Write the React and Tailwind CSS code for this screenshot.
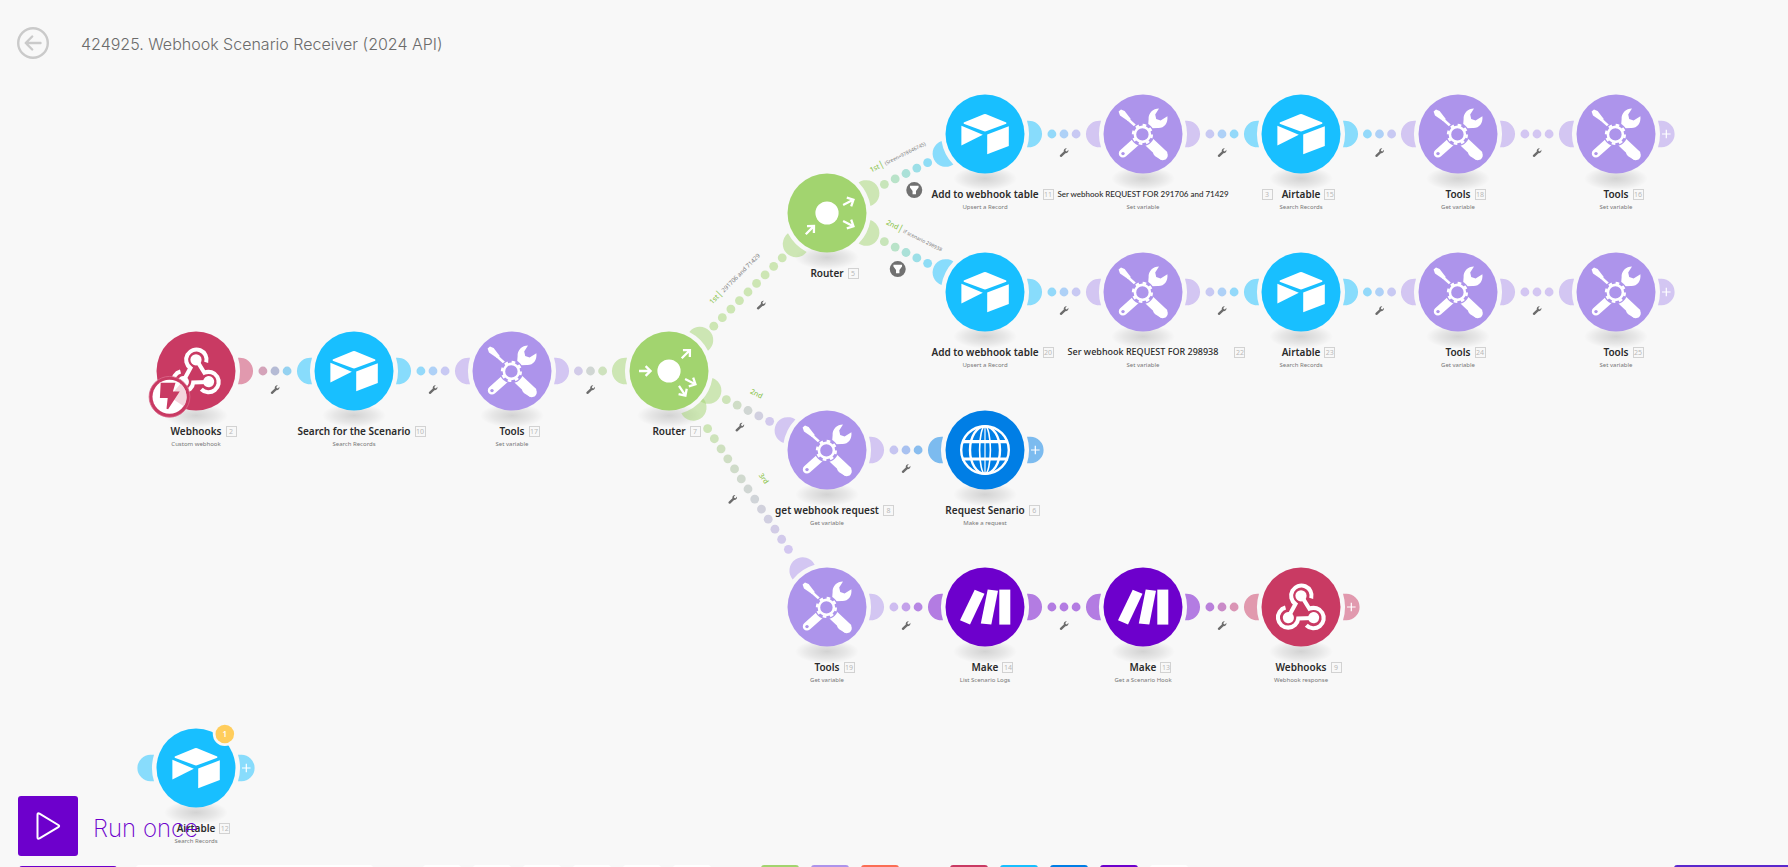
import React from "react";

const COLORS = {
  webhook: "#c93a63",
  airtable: "#18bfff",
  tools: "#ad94eb",
  router: "#a2d46f",
  http: "#007ee5",
  make: "#6d00cc",
};

const NODES = [
  { id: 2, kind: "webhook", x: 196, y: 371, title: "Webhooks", sub: "Custom webhook", tabs: [0], instant: true },
  { id: 10, kind: "airtable", x: 354, y: 371, title: "Search for the Scenario", sub: "Search Records", tabs: [180, 0] },
  { id: 17, kind: "tools", x: 512, y: 371, title: "Tools", sub: "Set variable", tabs: [180, 0] },
  { id: 7, kind: "router", x: 669, y: 371, title: "Router", tabs: [180, -45, 26.6, 56.3], inAngle: 0, outAngles: [-45, 26.6, 56.3] },
  { id: 5, kind: "router", x: 827, y: 213, title: "Router", tabs: [135, -26.6, 26.6], inAngle: -45, outAngles: [-26.6, 26.6] },
  { id: 11, kind: "airtable", x: 985, y: 134, title: "Add to webhook table", sub: "Upsert a Record", tabs: [153.4, 0] },
  { id: 3, kind: "tools", x: 1143, y: 134, title: "Ser webhook REQUEST FOR 291706 and 71429", sub: "Set variable", tabs: [180, 0], size: "small", shift: 29 },
  { id: 15, kind: "airtable", x: 1301, y: 134, title: "Airtable", sub: "Search Records", tabs: [180, 0] },
  { id: 18, kind: "tools", x: 1458, y: 134, title: "Tools", sub: "Get variable", tabs: [180, 0] },
  { id: 16, kind: "tools", x: 1616, y: 134, title: "Tools", sub: "Set variable", tabs: [180], openTabs: [0] },
  { id: 20, kind: "airtable", x: 985, y: 292, title: "Add to webhook table", sub: "Upsert a Record", tabs: [-153.4, 0] },
  { id: 22, kind: "tools", x: 1143, y: 292, title: "Ser webhook REQUEST FOR 298938", sub: "Set variable", tabs: [180, 0], size: "medium", shift: 12 },
  { id: 23, kind: "airtable", x: 1301, y: 292, title: "Airtable", sub: "Search Records", tabs: [180, 0] },
  { id: 24, kind: "tools", x: 1458, y: 292, title: "Tools", sub: "Get variable", tabs: [180, 0] },
  { id: 25, kind: "tools", x: 1616, y: 292, title: "Tools", sub: "Set variable", tabs: [180], openTabs: [0] },
  { id: 8, kind: "tools", x: 827, y: 450, title: "get webhook request", sub: "Get variable", tabs: [-153.4, 0] },
  { id: 6, kind: "http", x: 985, y: 450, title: "Request Senario", sub: "Make a request", tabs: [180], openTabs: [0] },
  { id: 19, kind: "tools", x: 827, y: 607, title: "Tools", sub: "Get variable", tabs: [-123.7, 0] },
  { id: 14, kind: "make", x: 985, y: 607, title: "Make", sub: "List Scenario Logs", tabs: [180, 0] },
  { id: 13, kind: "make", x: 1143, y: 607, title: "Make", sub: "Get a Scenario Hook", tabs: [180, 0] },
  { id: 9, kind: "webhook", x: 1301, y: 607, title: "Webhooks", sub: "Webhook response", tabs: [180], openTabs: [0] },
  { id: 12, kind: "airtable", x: 196, y: 768, title: "Airtable", sub: "Search Records", tabs: [], openTabs: [180, 0], warn: 1 },
];

const LINKS = [
  { from: 2, to: 10, dots: 3 },
  { from: 10, to: 17, dots: 3 },
  { from: 17, to: 7, dots: 3 },
  { from: 7, to: 5, dots: 9, order: "1st", label: "291706 and 71429", labelSize: 6 },
  { from: 7, to: 8, dots: 5, order: "2nd" },
  { from: 7, to: 19, dots: 13, order: "3rd" },
  { from: 5, to: 11, dots: 5, order: "1st", label: "(Sreen=978646745)", labelSize: 5, filter: true },
  { from: 5, to: 20, dots: 5, order: "2nd", label: "if scenario 298938", labelSize: 5, filter: true },
  { from: 11, to: 3, dots: 3 },
  { from: 3, to: 15, dots: 3 },
  { from: 15, to: 18, dots: 3 },
  { from: 18, to: 16, dots: 3 },
  { from: 20, to: 22, dots: 3 },
  { from: 22, to: 23, dots: 3 },
  { from: 23, to: 24, dots: 3 },
  { from: 24, to: 25, dots: 3 },
  { from: 8, to: 6, dots: 3 },
  { from: 19, to: 14, dots: 3 },
  { from: 14, to: 13, dots: 3 },
  { from: 13, to: 9, dots: 3 },
];

const DOT_STEP = 12.1;
const SIDE_OFFSET = 18.5;

function mix(a, b, t) {
  const channel = (hex, i) => parseInt(hex.slice(1 + i * 2, 3 + i * 2), 16);
  const rgb = [0, 1, 2].map((i) => Math.round(channel(a, i) * (1 - t) + channel(b, i) * t));
  return `rgb(${rgb.join(",")})`;
}

function Link({ link }) {
  const a = NODES.find((n) => n.id === link.from);
  const b = NODES.find((n) => n.id === link.to);
  const dx = b.x - a.x;
  const dy = b.y - a.y;
  const len = Math.hypot(dx, dy);
  const ux = dx / len;
  const uy = dy / len;
  const mx = (a.x + b.x) / 2;
  const my = (a.y + b.y) / 2;
  const angle = (Math.atan2(dy, dx) * 180) / Math.PI;
  const px = mx - uy * SIDE_OFFSET;
  const py = my + ux * SIDE_OFFSET;
  return (
    <g>
      {Array.from({ length: link.dots }, (_, i) => {
        const d = (i - (link.dots - 1) / 2) * DOT_STEP;
        return (
          <circle
            key={i}
            cx={mx + ux * d}
            cy={my + uy * d}
            r="4.4"
            fill={mix(COLORS[a.kind], COLORS[b.kind], (i + 0.4) / (link.dots - 0.2))}
            opacity="0.5"
          />
        );
      })}
      {link.filter ? (
        <g transform={`translate(${px} ${py})`}>
          <circle r="8" fill="#717171" />
          <path d="M-4.3-4.2h8.6v1.6L1.7 1v3.3h-3.4V1l-2.6-3.6z" fill="#fff" />
        </g>
      ) : (
        <g transform={`translate(${px} ${py})`}>
          <path
            d="M-3.9 2.4-.2-1.1C-.6-2.9.8-4.6 2.8-4.3L1.3-2.5l.4 1.1 1.2.3L4.4-2.8C4.8-.7 3.2 1 1.4.8L-2.2 4.2C-3.6 4.9-4.9 3.6-3.9 2.4Z"
            fill="#6c6c6c"
          />
        </g>
      )}
      {link.order && (
        <text
          transform={`translate(${mx + uy * SIDE_OFFSET} ${my - ux * SIDE_OFFSET}) rotate(${angle})`}
          textAnchor="middle"
          y="2"
          fontSize="7"
          fill="#8fc653"
          className="font-['Noto_Sans',sans-serif] font-medium"
        >
          {link.order}
          {link.label && (
            <>
              <tspan fontSize="9" fontWeight="400">|</tspan>
              <tspan fontSize={link.labelSize} fontWeight="400" fill="#7c7c7c"> {link.label}</tspan>
            </>
          )}
        </text>
      )}
    </g>
  );
}

function Arrow({ angle, inward }) {
  return (
    <g transform={inward ? `rotate(${angle}) translate(-24 0)` : `rotate(${angle}) translate(24 0)`}>
      <path d="M-6 0H5.4M.6-4.9 5.6 0 .6 4.9" fill="none" stroke="#fff" strokeWidth="2.3" />
    </g>
  );
}

function Glyph({ node }) {
  const color = COLORS[node.kind];
  if (node.kind === "airtable") {
    return (
      <g fill="#fff">
        <path d="M-1.2-19.8Q0-20.4 1.2-19.8L21.3-11.4V-10.2L1-2.7Q0-2.4-1-2.7L-21.3-10.2V-11.4Z" />
        <path d="M-23.6-8.2-2.2.7-23.6 11.4Z" />
        <path d="M2.2.6 23.8-7.7V12L2.2 20.2Z" />
      </g>
    );
  }
  if (node.kind === "webhook") {
    return (
      <g>
        {[0, -120, 120].map((r) => (
          <g key={r} transform={`rotate(${r} 0 3.4)`}>
            <path d="M10.2-8.6A10.2 10.2 0 1 0-5.6-3L-12.6 10" fill="none" stroke="#fff" strokeWidth="4.1" />
            <circle cx="0" cy="-11.2" r="5.6" fill="#fff" />
          </g>
        ))}
      </g>
    );
  }
  if (node.kind === "make") {
    return (
      <g fill="#fff">
        <path d="M-10.3-17.3-.5-13.3-15 17.5-25 13.2Z" />
        <path d="M2.7-17.4 13-16.3 6.3 17.6-4.2 16.6Z" />
        <path d="M14.3-17.4h11v35h-11z" />
      </g>
    );
  }
  if (node.kind === "http") {
    return (
      <g fill="none" stroke="#fff" strokeWidth="2.4">
        <circle r="23.8" />
        <ellipse rx="15" ry="23.8" />
        <ellipse rx="5.4" ry="23.8" strokeWidth="1.6" />
        <path d="M0-24V24" strokeWidth="1.2" />
        <path d="M-23-8.4H23M-23 9H23" strokeWidth="3.2" />
      </g>
    );
  }
  if (node.kind === "router") {
    return (
      <g>
        <circle r="11.6" fill="#fff" />
        <Arrow angle={node.inAngle} inward />
        {node.outAngles.map((a) => (
          <Arrow key={a} angle={a} />
        ))}
      </g>
    );
  }
  return (
    <g>
      <path d="M-24.4-22.4-22-24.4-18.4-23-12.4-15.2-13-13.2-15-13-23-18.6Z" fill="#fff" />
      <path d="M-15-14.8-6-6.6" stroke="#fff" strokeWidth="2.6" />
      <path d="M-20 19.4-5 6" stroke="#fff" strokeWidth="8.4" strokeLinecap="round" />
      <circle cx="-20" cy="19.6" r="1.7" fill={color} />
      <path d="M4 6 21 22" stroke="#fff" strokeWidth="10" />
      <path d="M15 18 19.8 21.2" stroke="#fff" strokeWidth="10" strokeLinecap="round" />
      <path
        d="M16-25.6C10-25.6 5.2-21 5.6-14.8L5.2-9.6 9-5.8 14.6-6C21-5.4 25.2-10.8 24.4-17.8L17.6-13.6 13.2-15 12.2-19.6Z"
        fill="#fff"
      />
      <circle cx="-.6" cy=".4" r="11.8" fill={color} />
      <circle cx="-.6" cy=".4" r="9.4" fill="none" stroke="#fff" strokeWidth="2.4" strokeDasharray="3.6 3.78" />
      <circle cx="-.6" cy=".4" r="7.5" fill="none" stroke="#fff" strokeWidth="2.6" />
    </g>
  );
}

function InstantBadge() {
  return (
    <g transform="translate(-26.5 25.8)">
      <circle r="20.4" fill="#c93a63" stroke="#d96b8b" strokeWidth="0.8" />
      <circle r="17" fill="#fff" />
      <path d="M0 0 11-13A17 17 0 0 1 14.2 9.4Z" fill="#f4d6de" />
      <path d="M-8.8-14H6L3.4-5.2H10.2L-1.4 12.4-3 12-1.8 1.2H-9.6Z" fill="#c93a63" />
    </g>
  );
}

const TITLE_SIZE = {
  normal: "font-['Noto_Sans',sans-serif] text-[10px] font-semibold",
  medium: "font-['Noto_Sans',sans-serif] text-[9px] font-medium",
  small: "font-['Lato',sans-serif] text-[8px] font-medium",
};

function Node({ node }) {
  const color = COLORS[node.kind];
  return (
    <div className="absolute flex w-0 flex-col items-center" style={{ left: node.x, top: node.y - 60 }}>
      <button type="button" aria-label={`${node.title} module ${node.id}`} className="h-[114px] w-[120px] shrink-0">
        <svg viewBox="-60 -60 120 114" width="120" height="114" className="block overflow-visible">
          <ellipse cx="0" cy="44.5" rx="32" ry="12" fill="url(#shadow)" />
          {node.tabs.map((t) => (
            <path
              key={t}
              transform={`rotate(${t})`}
              d="M42-13.2A13.4 13.3 0 1 1 42 13.2 44 44 0 0 0 42-13.2Z"
              fill={color}
              opacity="0.5"
            />
          ))}
          {(node.openTabs || []).map((t) => (
            <path
              key={t}
              transform={`rotate(${t})`}
              d="M42-13.2H45.4A13.2 13.2 0 0 1 45.4 13.2H42A44 44 0 0 0 42-13.2Z"
              fill={color}
              opacity="0.5"
            />
          ))}
          {node.openTabs && <path d="M46 0H54.6M50.3-4.3V4.3" stroke="#fff" strokeWidth="1.2" />}
          <circle r="39.5" fill={color} />
          <Glyph node={node} />
          {node.instant && <InstantBadge />}
          {node.warn && (
            <g transform="translate(28.8 -34)">
              <circle r="12" fill="#f8f8f8" />
              <circle r="9.3" fill="#ffcd5c" />
              <text y="3" textAnchor="middle" fontSize="8" fill="#fff" className="font-['Noto_Sans',sans-serif] font-semibold">
                {node.warn}
              </text>
            </g>
          )}
        </svg>
      </button>
      <div className="relative flex h-3 items-center whitespace-nowrap text-[#2b2b2b]">
        <span className={TITLE_SIZE[node.size || "normal"]}>{node.title}</span>
        <span className="absolute left-full flex" style={{ paddingLeft: 4 + (node.shift || 0) }}>
          <span className="flex h-[11px] w-[11px] items-center justify-center border border-[#d2d2d2] font-['Noto_Sans',sans-serif] text-[7px] leading-none text-[#b9b9b9]">
            {node.id}
          </span>
        </span>
      </div>
      {node.sub && (
        <span className="mt-[3px] whitespace-nowrap font-['Noto_Sans',sans-serif] text-[6px] leading-[8px] text-[#777]">
          {node.sub}
        </span>
      )}
    </div>
  );
}

const TOOL_GROUPS = [
  { name: "Control", gap: "ml-[50px]", items: ["bg-white", "bg-white", "bg-white", "bg-white", "bg-white", "bg-white"] },
  { name: "Tool", gap: "ml-[50px]", items: ["bg-[#a2d46f]", "bg-[#ad94eb]", "bg-[#fb6e55]"] },
  { name: "Favorite", gap: "ml-[51px]", items: ["bg-[#c93a63]", "bg-[#18bfff]", "bg-[#007ee5]", "bg-[#6d00cc]", "bg-white"] },
];

export default function App() {
  return (
    <div className="relative flex h-screen flex-col overflow-hidden bg-[#f8f8f8]">
      <header className="flex items-center gap-8 pt-[27px] pl-[17px]">
        <button type="button" aria-label="Back" className="h-8 w-8">
          <svg viewBox="0 0 32 32" width="32" height="32" fill="none" stroke="#cacaca" strokeWidth="2.4">
            <circle cx="16" cy="16" r="14.8" />
            <path d="M23.5 16H9M15.2 9.5 8.7 16l6.5 6.5" strokeLinecap="round" strokeLinejoin="round" />
          </svg>
        </button>
        <h1 className="pt-px font-['Inter',sans-serif] text-[16px] font-light text-[#6b6b6b]">
          424925. Webhook Scenario Receiver (2024 API)
        </h1>
      </header>

      <main className="absolute inset-0">
        <svg className="absolute inset-0 h-full w-full">
          <defs>
            <radialGradient id="shadow">
              <stop offset="0" stopColor="#000" stopOpacity="0.15" />
              <stop offset="0.6" stopColor="#000" stopOpacity="0.07" />
              <stop offset="1" stopColor="#000" stopOpacity="0" />
            </radialGradient>
          </defs>
          {LINKS.map((l) => (
            <Link key={`${l.from}-${l.to}`} link={l} />
          ))}
        </svg>
        {NODES.map((n) => (
          <Node key={n.id} node={n} />
        ))}
      </main>

      <footer className="relative mt-auto">
        <button type="button" className="ml-[18px] flex items-center gap-[15px]">
          <span className="flex h-[60px] w-[60px] items-center justify-center rounded-[3px] bg-[#6d00cc]">
            <svg viewBox="0 0 28 28" width="28" height="28" fill="none" stroke="#fff" strokeWidth="2">
              <path d="M3.5 2.8Q3.5.6 5.5 1.7L24.3 13Q26 14 24.3 15.2L5.5 26.3Q3.5 27.4 3.5 25.2Z" />
            </svg>
          </span>
          <span className="pt-[6px] font-['Inter',sans-serif] text-[24px] font-extralight text-[#6d00cc]">Run once</span>
        </button>
        <div className="mt-[9px] flex h-[2px] items-start overflow-hidden">
          <button type="button" aria-label="Scheduling" className="mt-px ml-[19px] h-9 w-[98px] rounded-[3px] bg-[#6d00cc]" />
          <button type="button" aria-label="Schedule settings" className="ml-[19px] h-9 w-[237px] rounded-[3px] bg-white" />
          {TOOL_GROUPS.map((g) => (
            <div key={g.name} className={`${g.gap} flex gap-3`}>
              {g.items.map((c, i) => (
                <button key={i} type="button" aria-label={`${g.name} ${i + 1}`} className={`${c} h-[38px] w-[38px] rounded-[3px]`} />
              ))}
            </div>
          ))}
          <button type="button" aria-label="Assistant" className="ml-auto h-9 w-[114px] rounded-tl-[3px] bg-[#5a28cc]" />
        </div>
      </footer>
    </div>
  );
}
